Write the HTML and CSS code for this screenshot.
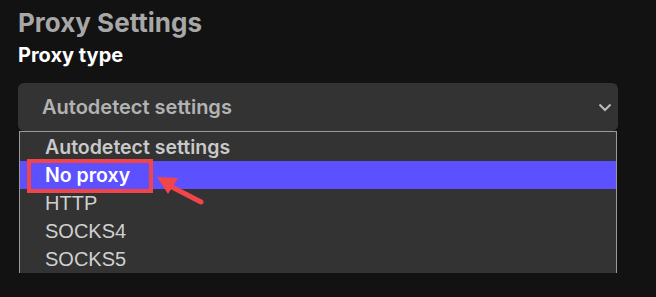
FILE: index.html
```html
<!DOCTYPE html>
<html>
<head>
<meta charset="utf-8">
<link rel="stylesheet" href="styles.css">
</head>
<body>
<div class="page">
  <h1 class="title">Proxy Settings</h1>
  <div class="label">Proxy type</div>
  <div class="select-wrap">
    <div class="select">
      <span class="select-text">Autodetect settings</span>
      <svg class="chevron" width="14" height="9" viewBox="0 0 14 9"><path d="M1.5 1.5 L7 7 L12.5 1.5" fill="none" stroke="#bdbdbd" stroke-width="2"/></svg>
    </div>
    <ul class="options">
      <li class="opt opt-first">Autodetect settings</li>
      <li class="opt opt-active">No proxy</li>
      <li class="opt opt-plain">HTTP</li>
      <li class="opt opt-plain">SOCKS4</li>
      <li class="opt opt-plain">SOCKS5</li>
    </ul>
    <div class="highlight-box"></div>
    <svg class="arrow" width="60" height="40" viewBox="0 0 60 40">
      <line x1="55" y1="35" x2="24" y2="19" stroke="#f24549" stroke-width="5" stroke-linecap="round"/>
      <polygon points="11,10 32,11 22,27" fill="#f24549"/>
    </svg>
  </div>
</div>
</body>
</html>
```
FILE: styles.css
```css
html, body {
  margin: 0;
  padding: 0;
  background: #121212;
  width: 656px;
  height: 297px;
  overflow: hidden;
  font-family: Inter, "Liberation Sans", sans-serif;
}
.page {
  padding: 7px 0 0 18px;
}
.title {
  margin: 0;
  font-size: 26px;
  line-height: 31px;
  font-weight: 700;
  color: #a7a7a7;
}
.label {
  margin-top: 5px;
  font-size: 20px;
  line-height: 25px;
  font-weight: 700;
  color: #ffffff;
}
.select-wrap {
  position: relative;
  margin-top: 15px;
  width: 600px;
}
.select {
  height: 48px;
  background: #333333;
  border-radius: 6px;
  display: flex;
  align-items: center;
  justify-content: space-between;
  padding: 0 6px 0 24px;
  box-sizing: border-box;
}
.select-text {
  font-size: 20px;
  font-weight: 600;
  color: #b3b3b3;
}
.chevron {
  display: block;
}
.options {
  position: absolute;
  top: 48px;
  left: 1px;
  width: 598px;
  box-sizing: border-box;
  margin: 0;
  padding: 1px 0 0 0;
  list-style: none;
  background: #333333;
  border: 1px solid #9a9a9a;
  border-bottom: none;
}
.opt {
  height: 28px;
  line-height: 28px;
  padding-left: 25px;
  font-size: 19.5px;
  color: #d0d0d0;
}
.opt-first {
  font-weight: 600;
  color: #c9c9c9;
}
.opt-active {
  background: #5c50ff;
  color: #ffffff;
  font-weight: 600;
}
.opt-plain {
  font-family: "Liberation Sans", Arial, sans-serif;
  font-size: 20px;
}
.highlight-box {
  position: absolute;
  left: 9px;
  top: 76px;
  width: 126px;
  height: 34px;
  box-sizing: border-box;
  border: 4px solid #f24549;
}
.arrow {
  position: absolute;
  left: 128px;
  top: 84px;
}
```
